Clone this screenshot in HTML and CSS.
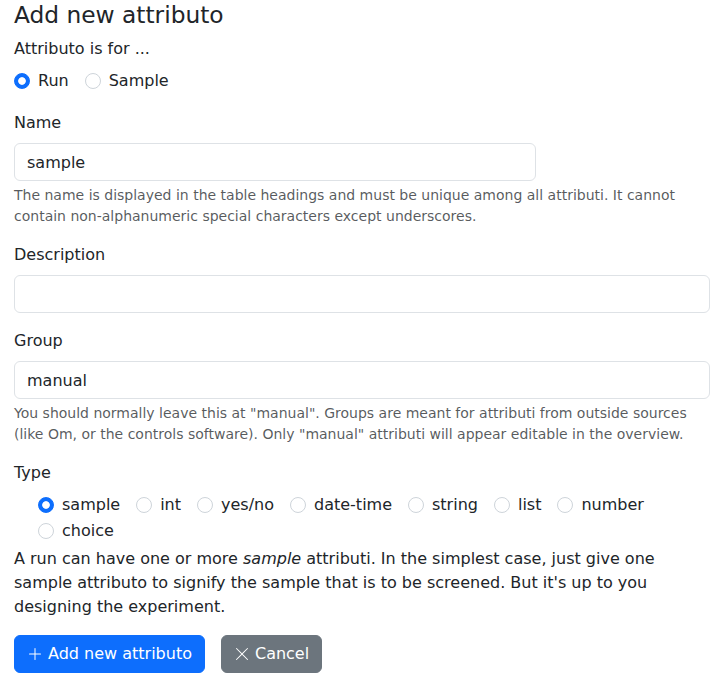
FILE: index.html
```html
<!DOCTYPE html>
<html lang="en">
<head>
<meta charset="utf-8">
<title>Add new attributo</title>
<link rel="stylesheet" href="styles.css">
</head>
<body>
<main class="page">
  <h4 class="title">Add new attributo</h4>
  <div class="group">
    <label class="form-label">Attributo is for ...</label>
    <div class="radios">
      <label class="check"><input type="radio" name="for" checked><span>Run</span></label>
      <label class="check"><input type="radio" name="for"><span>Sample</span></label>
    </div>
  </div>
  <div class="group">
    <label class="form-label">Name</label>
    <input class="control control-narrow" type="text" value="sample">
    <div class="form-text">The name is displayed in the table headings and must be unique among all attributi. It cannot contain non-alphanumeric special characters except underscores.</div>
  </div>
  <div class="group">
    <label class="form-label">Description</label>
    <input class="control" type="text" value="">
  </div>
  <div class="group">
    <label class="form-label">Group</label>
    <input class="control" type="text" value="manual">
    <div class="form-text">You should normally leave this at "manual". Groups are meant for attributi from outside sources (like Om, or the controls software). Only "manual" attributi will appear editable in the overview.</div>
  </div>
  <div class="type-group">
    <label class="form-label">Type</label>
    <div class="radios radios-indent">
      <label class="check"><input type="radio" name="type" checked><span>sample</span></label>
      <label class="check"><input type="radio" name="type"><span>int</span></label>
      <label class="check"><input type="radio" name="type"><span>yes/no</span></label>
      <label class="check"><input type="radio" name="type"><span>date-time</span></label>
      <label class="check"><input type="radio" name="type"><span>string</span></label>
      <label class="check"><input type="radio" name="type"><span>list</span></label>
      <label class="check"><input type="radio" name="type"><span>number</span></label>
      <label class="check"><input type="radio" name="type"><span>choice</span></label>
    </div>
    <p class="note">A run can have one or more <em>sample</em> attributi. In the simplest case, just give one sample attributo to signify the sample that is to be screened. But it's up to you designing the experiment.</p>
  </div>
  <div class="actions">
    <button class="btn btn-primary" type="button"><svg class="icon" viewBox="0 0 16 16" aria-hidden="true"><path fill-rule="evenodd" d="M8 2a.5.5 0 0 1 .5.5v5h5a.5.5 0 0 1 0 1h-5v5a.5.5 0 0 1-1 0v-5h-5a.5.5 0 0 1 0-1h5v-5A.5.5 0 0 1 8 2"/></svg> Add new attributo</button>
    <button class="btn btn-secondary" type="button"><svg class="icon" viewBox="0 0 16 16" aria-hidden="true"><path d="M2.146 2.854a.5.5 0 1 1 .708-.708L8 7.293l5.146-5.147a.5.5 0 0 1 .708.708L8.707 8l5.147 5.146a.5.5 0 0 1-.708.708L8 8.707l-5.146 5.147a.5.5 0 0 1-.708-.708L7.293 8z"/></svg> Cancel</button>
  </div>
</main>
</body>
</html>
```
FILE: styles.css
```css
* { box-sizing: border-box; }
html, body {
  margin: 0;
  padding: 0;
  background: #fff;
}
body {
  font-family: "DejaVu Sans", sans-serif;
  font-size: 16px;
  line-height: 1.5;
  color: #212529;
}
.page {
  padding: 0 5px 0 14px;
}
.title {
  margin: 0 0 8px;
  font-size: 23.3px;
  font-weight: 500;
  line-height: 29px;
  height: 29px;
}
.group {
  margin-bottom: 16px;
}
.form-label {
  display: block;
  margin-bottom: 8px;
}
.radios {
  display: flex;
  flex-wrap: wrap;
  column-gap: 16px;
}
.radios-indent {
  margin-left: 24px;
}
.check {
  display: inline-flex;
  align-items: center;
  gap: 8px;
  min-height: 24px;
  margin-bottom: 2px;
}
.check input {
  appearance: none;
  -webkit-appearance: none;
  margin: 0;
  width: 16px;
  height: 16px;
  border: 1px solid #ced4da;
  border-radius: 50%;
  background: #fff;
  flex: none;
}
.check input:checked {
  border-color: #0d6efd;
  background: radial-gradient(circle, #fff 0 3.4px, #0d6efd 4.2px);
}
.control {
  display: block;
  width: 100%;
  height: 38px;
  padding: 6px 12px;
  font: inherit;
  color: #212529;
  background: #fff;
  border: 1px solid #dee2e6;
  border-radius: 6px;
  outline: none;
}
.control-narrow {
  width: 75%;
}
.form-text {
  margin-top: 4px;
  font-size: 14px;
  line-height: 1.5;
  color: rgba(33, 37, 41, 0.75);
}
.type-group {
  margin-bottom: 16px;
}
.note {
  margin: 2px 0 0;
}
.actions {
  display: flex;
  gap: 16px;
}
.btn {
  display: inline-flex;
  align-items: center;
  gap: 5px;
  height: 38px;
  padding: 6px 12px;
  font: inherit;
  color: #fff;
  border: 1px solid transparent;
  border-radius: 6px;
}
.btn-primary {
  background: #0d6efd;
  border-color: #0d6efd;
}
.btn-secondary {
  background: #6c757d;
  border-color: #6c757d;
}
.icon {
  width: 16px;
  height: 16px;
  fill: currentColor;
  flex: none;
}
```
